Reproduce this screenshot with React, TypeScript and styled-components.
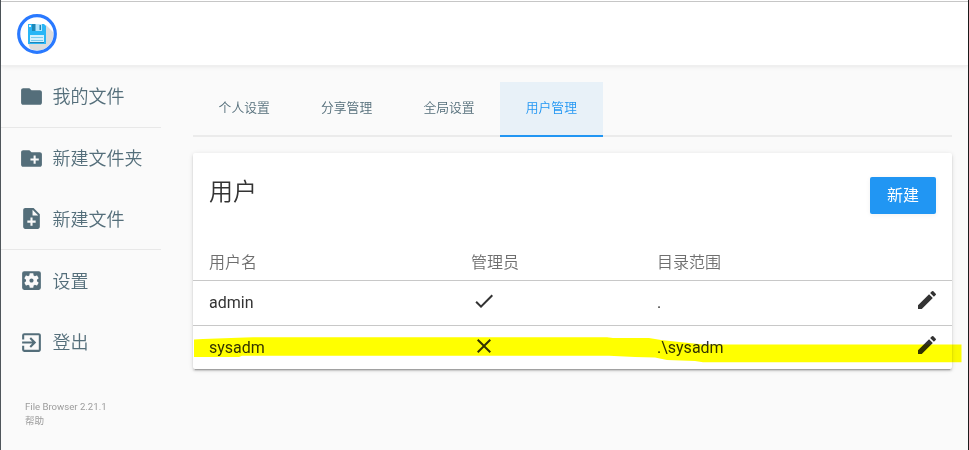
import React from 'react';
import styled, { createGlobalStyle } from 'styled-components';
import {
  MdFolder, MdCreateNewFolder, MdNoteAdd, MdSettingsApplications,
  MdExitToApp, MdCheck, MdClose, MdEdit,
} from 'react-icons/md';

const GlobalStyle = createGlobalStyle`
  * { box-sizing: border-box; }
  body { margin: 0; background: #fafafa; overflow: hidden; }
  button { font: inherit; border: 0; background: none; padding: 0; cursor: pointer; }
  svg { display: block; }
`;

const Page = styled.div`
  height: 450px;
  display: flex;
  flex-direction: column;
  border-left: 1px solid #4f565b;
  border-right: 1px solid #1c1c1c;
  background: #fafafa;
  color: #333;
  font-family: Roboto, "Noto Sans CJK SC", sans-serif;
  font-size: 16px;
`;

const Header = styled.header`
  height: 66px;
  flex: none;
  display: flex;
  align-items: center;
  padding: 2px 0 0 16px;
  background: #fff;
  border-top: 1px solid #fff;
  border-bottom: 1px solid #efefef;
  box-shadow: inset 0 1px 0 #c6c6c6, 0 0 5px rgba(0, 0, 0, 0.1);
`;

const Body = styled.div`
  display: flex;
  flex: 1;
  min-height: 0;
`;

const Sidebar = styled.nav`
  width: 160px;
  flex: none;
`;

const NavGroup = styled.div`
  & + & { border-top: 1px solid #e8e8e8; }
`;

const NavItem = styled.button<{ $height?: number }>`
  display: flex;
  align-items: center;
  width: 100%;
  height: ${(p) => p.$height ?? 61}px;
  padding: 0 0 3px 18px;
  gap: 8.5px;
  color: #546e7a;
  font-size: 18px;
  font-weight: 350;
  white-space: nowrap;
  svg { width: 25px; height: 25px; margin-top: 2px; }
`;

const Credits = styled.footer`
  margin: 27px 0 0 24px;
  color: #9c9c9c;
  font-size: 9.6px;
  line-height: 14px;
  span { display: block; }
`;

const Main = styled.main`
  flex: 1;
  padding: 16px 16px 0 32px;
`;

const Tabs = styled.div`
  display: flex;
  height: 55px;
  width: 759px;
  border-bottom: 2px solid #ebebeb;
`;

const Tab = styled.button<{ $active?: boolean }>`
  width: 102.4px;
  height: 55px;
  padding-bottom: 5px;
  font-size: 12.8px;
  font-weight: 350;
  color: ${(p) => (p.$active ? '#2196f3' : '#546e7a')};
  background: ${(p) => (p.$active ? '#e8f1f8' : 'transparent')};
  border-bottom: 2px solid ${(p) => (p.$active ? '#2196f3' : 'transparent')};
`;

const Card = styled.section`
  position: relative;
  width: 759px;
  height: 216px;
  margin-top: 16px;
  background: #fff;
  border-radius: 2px;
  box-shadow: 0 2px 2px rgba(0, 0, 0, 0.14), 0 1px 5px rgba(0, 0, 0, 0.12),
    0 3px 1px -2px rgba(0, 0, 0, 0.2);
`;

const CardTitle = styled.div`
  display: flex;
  align-items: flex-start;
  justify-content: space-between;
  height: 90px;
  padding: 24px 16px 0;
`;

const Title = styled.h2`
  margin: 1px 0 0;
  font-size: 24px;
  line-height: 28px;
  font-weight: 350;
`;

const NewButton = styled.button`
  width: 66px;
  height: 37px;
  padding-bottom: 3px;
  border-radius: 2px;
  background: #2196f3;
  color: #fff;
  box-shadow: 0 1px 5px rgba(0, 0, 0, 0.06);
`;

const Row = styled.div<{ $head?: boolean }>`
  display: grid;
  grid-template-columns: 262px 186px 1fr 24px;
  align-items: center;
  height: ${(p) => (p.$head ? 37 : 45)}px;
  padding: 0 13px 2px 16px;
  color: ${(p) => (p.$head ? '#6f6f6f' : '#333')};
  font-weight: ${(p) => (p.$head ? 350 : 400)};
  & + & { border-top: 1px solid #c8c8c8; }
  svg { width: 24px; height: 24px; margin-top: -4px; }
  span > svg { margin: -3px 0 0 0.5px; }
`;

const Marker = styled.svg`
  position: absolute;
  left: 0;
  top: 180px;
  mix-blend-mode: multiply;
  pointer-events: none;
`;

const Logo = () => (
  <svg width="40" height="40" viewBox="0 0 40 40">
    <circle cx="20" cy="20" r="18.3" fill="#fff" />
    <path d="M29 11l8 8a17 17 0 0 1-17 17.5 17 17 0 0 1-7-2L11 29z" fill="#dcdcdc" />
    <circle cx="20" cy="20" r="17.5" fill="none" stroke="#fff" strokeWidth="2" />
    <circle cx="20" cy="20" r="18.3" fill="none" stroke="#2979ff" strokeWidth="3.2" />
    <path d="M11 10h16l2 2v18H11z" fill="#29b6f6" />
    <path d="M15 10h10v7H15z" fill="#b3e5fc" />
    <path d="M15 10h3.5v7H15zM22.5 11h1.5v5h-1.5z" fill="#1e88b8" />
    <path d="M12 11h2v2h-2z" fill="#e1f5fe" />
    <path d="M13 21h14v7H13z" fill="#d4f0fd" />
    <path d="M14 23.5h12M14 26.5h12" stroke="#7ccbee" />
    <path d="M13 28.5h14" stroke="#1f83b5" />
  </svg>
);

const users = [
  { name: 'admin', admin: true, scope: '.' },
  { name: 'sysadm', admin: false, scope: '.\\sysadm' },
];

const tabs = ['个人设置', '分享管理', '全局设置', '用户管理'];

export default function App() {
  return (
    <>
      <GlobalStyle />
      <Page>
        <Header><Logo /></Header>
        <Body>
          <Sidebar>
            <NavGroup>
              <NavItem><MdFolder />我的文件</NavItem>
            </NavGroup>
            <NavGroup>
              <NavItem><MdCreateNewFolder />新建文件夹</NavItem>
              <NavItem $height={60}><MdNoteAdd />新建文件</NavItem>
            </NavGroup>
            <NavGroup>
              <NavItem $height={62}><MdSettingsApplications />设置</NavItem>
              <NavItem><MdExitToApp />登出</NavItem>
            </NavGroup>
            <Credits><span>File Browser 2.21.1</span><span>帮助</span></Credits>
          </Sidebar>
          <Main>
            <Tabs>
              {tabs.map((t, i) => <Tab key={t} $active={i === 3}>{t}</Tab>)}
            </Tabs>
            <Card>
              <CardTitle>
                <Title>用户</Title>
                <NewButton>新建</NewButton>
              </CardTitle>
              <Row $head>
                <span>用户名</span><span>管理员</span><span>目录范围</span>
              </Row>
              {users.map((u) => (
                <Row key={u.name}>
                  <span>{u.name}</span>
                  <span>{u.admin ? <MdCheck /> : <MdClose />}</span>
                  <span>{u.scope}</span>
                  <MdEdit />
                </Row>
              ))}
              <Marker width="770" height="40" viewBox="0 0 770 40">
                <path
                  d="M1 6.5L10 6 52 4.5 60 4.3H414L420 5H456L468 7 510 11.5H768.5V29.3H510L502 28 474 27 462 24.5 442 24 416 22.7H49L46 24H1z"
                  fill="#ff0"
                />
              </Marker>
            </Card>
          </Main>
        </Body>
      </Page>
    </>
  );
}
